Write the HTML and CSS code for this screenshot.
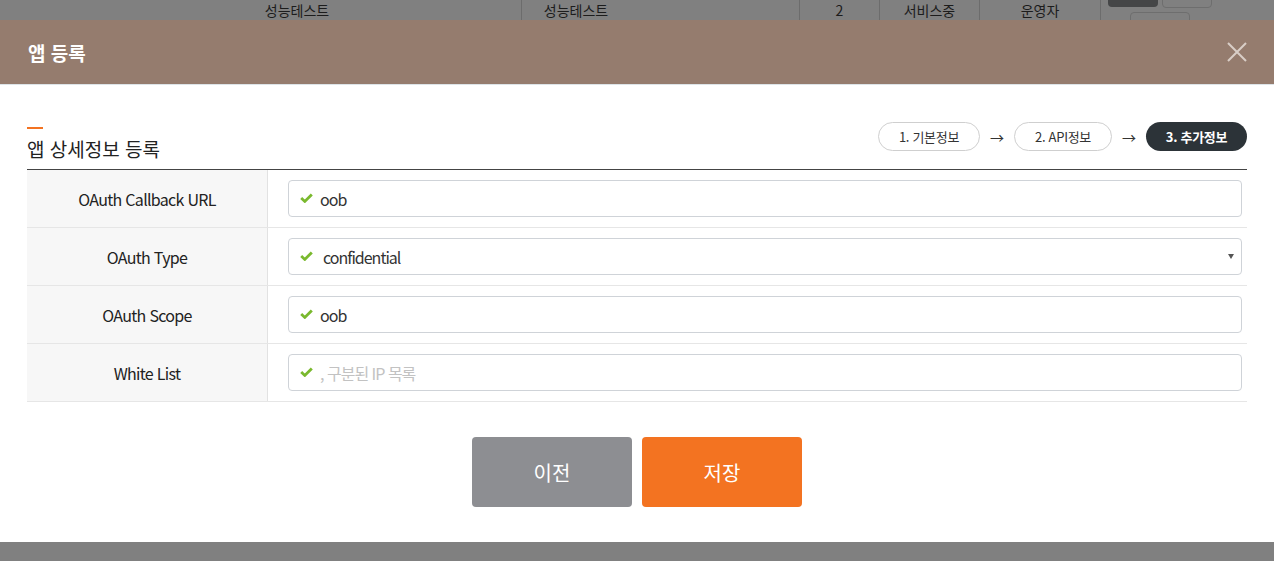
FILE: index.html
```html
<!DOCTYPE html>
<html lang="ko">
<head>
    <meta charset="UTF-8">
    <title>앱 등록</title>
    <link rel="stylesheet" href="styles.css">
</head>
<body>
    <!-- app list behind the dim layer -->
    <div class="app-list">
        <div class="app-row">
            <div class="cell cell-name">성능테스트</div>
            <div class="cell cell-desc">성능테스트</div>
            <div class="cell cell-blank"></div>
            <div class="cell cell-count">2</div>
            <div class="cell cell-state">서비스중</div>
            <div class="cell cell-role">운영자</div>
            <div class="cell cell-actions">
                <span class="row-btn row-btn-dark"></span>
                <span class="row-btn row-btn-line"></span>
                <span class="row-btn row-btn-line row-btn-low"></span>
            </div>
        </div>
    </div>

    <div class="modal">
        <div class="modal-header">
            <h2>앱 등록</h2>
            <button class="modal-close" title="닫기">
                <svg width="20" height="20" viewBox="0 0 20 20">
                    <path d="M1 1 L19 19 M19 1 L1 19" stroke="#d9cec7" stroke-width="2" fill="none"/>
                </svg>
            </button>
        </div>

        <div class="modal-body">
            <div class="section-head">
                <div class="section-title">
                    <span class="title-bar"></span>
                    <h3>앱 상세정보 등록</h3>
                </div>
                <div class="steps">
                    <span class="step step-1">1. 기본정보</span>
                    <span class="step-arrow">→</span>
                    <span class="step step-2">2. API정보</span>
                    <span class="step-arrow">→</span>
                    <span class="step step-3 active">3. 추가정보</span>
                </div>
            </div>

            <div class="form-table">
                <div class="form-row">
                    <div class="form-label">OAuth Callback URL</div>
                    <div class="form-field">
                        <div class="field-box">
                            <svg class="check" width="13" height="10" viewBox="0 0 13 10"><path d="M1.2 5 L4.8 8.4 L11.8 1.4" stroke="#7ab92e" stroke-width="2.8" fill="none"/></svg>
                            <span class="field-value">oob</span>
                        </div>
                    </div>
                </div>
                <div class="form-row">
                    <div class="form-label">OAuth Type</div>
                    <div class="form-field">
                        <div class="field-box field-select">
                            <svg class="check" width="13" height="10" viewBox="0 0 13 10"><path d="M1.2 5 L4.8 8.4 L11.8 1.4" stroke="#7ab92e" stroke-width="2.8" fill="none"/></svg>
                            <span class="field-value">confidential</span>
                            <span class="select-caret"></span>
                        </div>
                    </div>
                </div>
                <div class="form-row">
                    <div class="form-label">OAuth Scope</div>
                    <div class="form-field">
                        <div class="field-box">
                            <svg class="check" width="13" height="10" viewBox="0 0 13 10"><path d="M1.2 5 L4.8 8.4 L11.8 1.4" stroke="#7ab92e" stroke-width="2.8" fill="none"/></svg>
                            <span class="field-value">oob</span>
                        </div>
                    </div>
                </div>
                <div class="form-row">
                    <div class="form-label">White List</div>
                    <div class="form-field">
                        <div class="field-box">
                            <svg class="check" width="13" height="10" viewBox="0 0 13 10"><path d="M1.2 5 L4.8 8.4 L11.8 1.4" stroke="#7ab92e" stroke-width="2.8" fill="none"/></svg>
                            <span class="field-value placeholder">, 구분된 IP 목록</span>
                        </div>
                    </div>
                </div>
            </div>

            <div class="modal-buttons">
                <button class="btn btn-prev">이전</button>
                <button class="btn btn-save">저장</button>
            </div>
        </div>
    </div>
</body>
</html>
```

FILE: styles.css
```css
body {
    margin: 0;
    background-color: #808080;
    font-family: "Noto Sans CJK KR", "Noto Sans", sans-serif;
    color: #222;
    overflow: hidden;
}

/* list page (dimmed) */
.app-list {
    height: 561px;
}

.app-row {
    display: flex;
    height: 20px;
    padding-left: 73px;
    font-size: 14px;
    line-height: 20px;
    color: #1c1c1c;
}

.cell {
    text-align: center;
    border-left: 1px solid #6c6c6c;
}

.cell-name { width: 448px; border-left: none; }
.cell-desc { width: 108px; }
.cell-blank { width: 169px; border-left: none; }
.cell-count { width: 79px; }
.cell-state { width: 99px; }
.cell-role { width: 120px; }

.cell-actions {
    position: relative;
    flex: 1;
}

.row-btn {
    position: absolute;
    border-radius: 4px;
}

.row-btn-dark {
    left: 7px;
    top: -10px;
    width: 50px;
    height: 17px;
    background: #454647;
}

.row-btn-line {
    left: 61px;
    top: -10px;
    width: 48px;
    height: 16px;
    border: 1px solid #6e6e6e;
}

.row-btn-low {
    left: 29px;
    top: 12px;
    width: 58px;
    height: 20px;
}

/* modal */
.modal {
    position: absolute;
    top: 20px;
    left: 0;
    right: 0;
    background: white;
}

.modal-header {
    display: flex;
    align-items: center;
    justify-content: space-between;
    height: 64px;
    padding: 0 27px 0 28px;
    background: #957c6e;
    border-bottom: 1px solid #dde4e8;
}

.modal-header h2 {
    margin: 0;
    font-size: 19px;
    font-weight: bold;
    color: white;
}

.modal-close {
    display: flex;
    padding: 0;
    border: none;
    background: none;
    cursor: pointer;
}

.modal-body {
    padding: 37px 27px 35px;
}

.section-head {
    display: flex;
    justify-content: space-between;
    align-items: flex-end;
    padding-bottom: 8px;
    border-bottom: 1px solid #444;
}

.title-bar {
    display: block;
    width: 16px;
    height: 2px;
    background: #f37321;
    margin-bottom: 8px;
}

.section-title h3 {
    margin: 0;
    font-size: 19px;
    line-height: 24px;
    font-weight: normal;
    color: #222;
}

.steps {
    display: flex;
    align-items: center;
    margin-bottom: 10px;
}

.step {
    display: flex;
    align-items: center;
    justify-content: center;
    height: 27px;
    border: 1px solid #cfcfcf;
    border-radius: 15px;
    font-size: 13px;
    letter-spacing: -0.3px;
    color: #333;
}

.step-1 { width: 100px; }
.step-2 { width: 96px; }
.step-3 { width: 101px; }

.step.active {
    height: 29px;
    border: none;
    background: #2c3338;
    color: white;
    font-weight: bold;
}

.step-arrow {
    width: 34px;
    text-align: center;
    font-size: 14px;
    color: #333;
}

/* form */
.form-row {
    display: flex;
    height: 57px;
    border-bottom: 1px solid #e6e6e6;
}

.form-label {
    display: flex;
    align-items: center;
    justify-content: center;
    width: 240px;
    background: #f7f7f7;
    border-right: 1px solid #e2e2e2;
    font-size: 16px;
    letter-spacing: -0.7px;
    color: #222;
}

.form-field {
    flex: 1;
    display: flex;
    align-items: center;
    padding: 0 5px 0 20px;
}

.field-box {
    display: flex;
    align-items: center;
    width: 100%;
    height: 37px;
    padding: 0 11px;
    border: 1px solid #cfd3d8;
    border-radius: 4px;
    box-sizing: border-box;
}

.check {
    flex: none;
    margin: -2px 7px 0 0;
}

.field-value {
    font-size: 16px;
    letter-spacing: -1px;
    color: #333;
}

.field-select .field-value {
    margin-left: 3px;
    flex: 1;
}

.placeholder {
    color: #c2c2c2;
}

.select-caret {
    width: 0;
    height: 0;
    border-left: 3px solid transparent;
    border-right: 3px solid transparent;
    border-top: 5px solid #555;
    margin-right: -4px;
}

.modal-buttons {
    display: flex;
    justify-content: center;
    gap: 10px;
    margin-top: 35px;
}

.btn {
    width: 160px;
    height: 70px;
    border: none;
    border-radius: 4px;
    font-family: inherit;
    font-size: 20px;
    color: white;
    cursor: pointer;
}

.btn-prev {
    background: #8d8e92;
}

.btn-save {
    background: #f37321;
}
```
